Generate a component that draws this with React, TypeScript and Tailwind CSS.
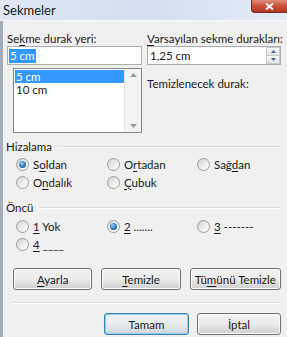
import React from "react";

const font = { fontFamily: 'Lato, "Noto Sans", sans-serif' };

function Radio({ checked }: { checked?: boolean }) {
  return (
    <div className="w-[13px] h-[13px] rounded-full border border-[#9a9ea4] bg-gradient-to-br from-[#d0d2d5] via-[#ececec] to-[#ffffff] flex items-center justify-center shrink-0">
      {checked && (
        <div className="w-[7px] h-[7px] rounded-full bg-[radial-gradient(circle_at_40%_35%,#9fd3f7_0%,#3a86c8_45%,#123f73_100%)]" />
      )}
    </div>
  );
}

function Opt({ checked, children }: { checked?: boolean; children: React.ReactNode }) {
  return (
    <div className="flex items-center h-[18px] gap-[4px]">
      <Radio checked={checked} />
      <span className="leading-[15px] whitespace-nowrap">{children}</span>
    </div>
  );
}

function Btn({ children, def, w }: { children: React.ReactNode; def?: boolean; w: string }) {
  return (
    <div
      className={
        "h-[22px] rounded-[3px] border flex items-center justify-center whitespace-nowrap " +
        w +
        (def
          ? " border-[#3c7fb1] bg-gradient-to-b from-[#f2f2f2] via-[#e8ecef] to-[#cdd5db] shadow-[inset_0_0_0_1px_#8fd0f2]"
          : " border-[#707070] bg-gradient-to-b from-[#f2f2f2] via-[#ebebeb] to-[#cfcfcf] shadow-[inset_0_0_0_1px_#fcfcfc]")
      }
    >
      <span className="leading-[15px]">{children}</span>
    </div>
  );
}

function U({ children }: { children: React.ReactNode }) {
  return <span className="underline underline-offset-[2px] decoration-1">{children}</span>;
}

export default function App() {
  return (
    <div className="w-[287px] h-[337px] bg-[#f0f0f0] text-[11.5px] text-[#1a1a1a] overflow-hidden flex flex-col" style={font}>
      {/* title bar */}
      <div className="h-[21px] shrink-0 flex justify-between bg-gradient-to-r from-[#dfe8f3] via-[#d3dfee] to-[#e4ecf6] border-b border-[#f6f9fc]">
        <span className="pl-[3px] pt-[2px] leading-[16px] text-[13px] text-[#1a1a1a]">Sekmeler</span>
        <div className="w-[36px] h-[13px] rounded-bl-[4px] bg-gradient-to-b from-[#e08b7a] via-[#c7503a] to-[#b33a22] border-l border-b border-[#7a2a1e] flex items-center justify-center">
          <svg width="9" height="7" viewBox="0 0 9 7">
            <path d="M1 0.5 L8 6.5 M8 0.5 L1 6.5" stroke="#ffffff" strokeWidth="2" />
          </svg>
        </div>
      </div>
      {/* body */}
      <div className="flex-1 flex flex-col border-l-[3px] border-[#a3acb7] pl-[4px] pr-[6px]">
        <div className="flex gap-[5px]">
          <div className="w-[136px] flex flex-col">
            <div className="mt-[10px] h-[15px] leading-[15px] whitespace-nowrap">
              Se<U>k</U>me durak yeri:
            </div>
            <div className="h-[19px] border border-[#abadb3] bg-white flex items-center pl-[1px]">
              <span className="bg-[#3399ff] text-white leading-[14px] px-[1px]">5 cm</span>
            </div>
            <div className="mt-[3px] ml-[6px] w-[129px] h-[65px] border border-[#828790] bg-white flex">
              <div className="flex-1 pt-[1px] pl-[1px]">
                <div className="h-[13px] bg-[#3399ff] text-white leading-[13px] pl-[1px]">5 cm</div>
                <div className="h-[13px] leading-[13px] pl-[1px]">10 cm</div>
              </div>
              <div className="w-[17px] bg-[#f3f3f3] border-l border-[#e6e6e6] flex flex-col justify-between items-center py-[4px]">
                <svg width="7" height="4" viewBox="0 0 7 4"><path d="M0 4 L3.5 0 L7 4 Z" fill="#9a9a9a" /></svg>
                <svg width="7" height="4" viewBox="0 0 7 4"><path d="M0 0 L3.5 4 L7 0 Z" fill="#9a9a9a" /></svg>
              </div>
            </div>
          </div>
          <div className="w-[134px] flex flex-col">
            <div className="mt-[10px] h-[15px] leading-[15px] whitespace-nowrap">
              <U>V</U>arsayılan sekme durakları:
            </div>
            <div className="h-[19px] border border-[#abadb3] bg-white flex items-center justify-between">
              <span className="pl-[2px] leading-[14px]">1,25 cm</span>
              <div className="w-[14px] h-[17px] flex flex-col">
                <div className="flex-1 border border-[#c6cad0] bg-gradient-to-b from-[#f7f7f7] to-[#e3e3e3] flex items-center justify-center">
                  <svg width="5" height="3" viewBox="0 0 5 3"><path d="M0 3 L2.5 0 L5 3 Z" fill="#4d6185" /></svg>
                </div>
                <div className="flex-1 border border-t-0 border-[#c6cad0] bg-gradient-to-b from-[#f7f7f7] to-[#e3e3e3] flex items-center justify-center">
                  <svg width="5" height="3" viewBox="0 0 5 3"><path d="M0 0 L2.5 3 L5 0 Z" fill="#4d6185" /></svg>
                </div>
              </div>
            </div>
            <div className="mt-[11px] h-[15px] leading-[15px] whitespace-nowrap">Temizlenecek durak:</div>
          </div>
        </div>

        {/* Hizalama */}
        <div className="mt-[6px] h-[15px] flex items-center">
          <span className="leading-[15px] -ml-[1px]">Hizalama</span>
          <div className="flex-1 ml-[6px] h-[2px] border-t border-[#d5dfe5] border-b border-b-white" />
        </div>
        <div className="mt-[1px] pl-[9px] grid grid-cols-[91px_90px_auto]">
          <Opt checked>S<U>o</U>ldan</Opt>
          <Opt>O<U>r</U>tadan</Opt>
          <Opt>Sağ<U>d</U>an</Opt>
          <Opt>O<U>n</U>dalık</Opt>
          <Opt><U>Ç</U>ubuk</Opt>
        </div>

        {/* Öncü */}
        <div className="mt-[9px] h-[15px] flex items-center">
          <span className="leading-[15px] -ml-[1px]">Öncü</span>
          <div className="flex-1 ml-[6px] h-[2px] border-t border-[#d5dfe5] border-b border-b-white" />
        </div>
        <div className="mt-[2px] pl-[9px] grid grid-cols-[91px_90px_auto]">
          <Opt><U>1</U> Yok</Opt>
          <Opt checked><U>2</U> .......</Opt>
          <Opt><U>3</U> -------</Opt>
          <Opt><U>4</U> ____</Opt>
        </div>

        {/* buttons */}
        <div className="mt-[15px] pl-[6px] flex gap-[9px]">
          <Btn w="w-[80px]"><U>A</U>yarla</Btn>
          <Btn w="w-[80px]"><U>T</U>emizle</Btn>
          <Btn w="w-[92px]">Tü<U>m</U>ünü Temizle</Btn>
        </div>
        <div className="mt-[12px] ml-[6px] h-[2px] border-t border-[#d5dfe5] border-b border-b-white" />
        <div className="mt-[9px] flex justify-end gap-[8px]">
          <Btn def w="w-[85px]">Tamam</Btn>
          <Btn w="w-[84px]">İptal</Btn>
        </div>
      </div>
    </div>
  );
}
